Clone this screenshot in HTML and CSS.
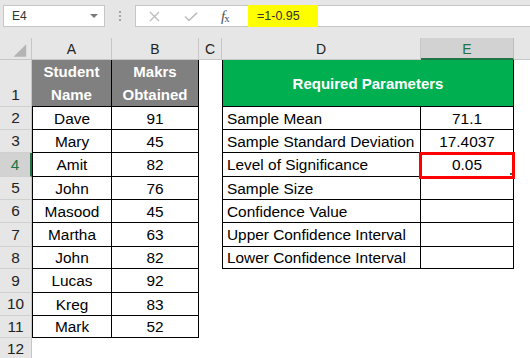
FILE: index.html
```html
<!DOCTYPE html>
<html>
<head>
<meta charset="utf-8">
<link rel="stylesheet" href="styles.css">
</head>
<body>
<div class="toolbar">
  <div class="namebox"><span>E4</span><span class="caret"></span></div>
  <div class="dots"><i></i><i></i><i></i></div>
  <div class="fbox">
    <svg class="ico-x" width="11" height="11" viewBox="0 0 11 11"><path d="M1 1L10 10M10 1L1 10" stroke="#bdbdbd" stroke-width="1.4" fill="none"/></svg>
    <svg class="ico-ok" width="14" height="10" viewBox="0 0 14 10"><path d="M1 4.5L5 8.5L13 0.8" stroke="#bdbdbd" stroke-width="1.6" fill="none"/></svg>
    <span class="fx"><i>f</i><sub>x</sub></span>
  </div>
  <div class="finput"><span class="hl">=1-0.95</span></div>
</div>
<div class="sheet">
  <div class="corner"><svg width="32" height="22" viewBox="0 0 32 22"><polygon points="27,6 27,19 14,19" fill="#b4b4b4"/></svg></div>
  <div class="ch">A</div><div class="ch">B</div><div class="ch">C</div><div class="ch">D</div><div class="ch sel">E</div><div class="ch last"></div>

  <div class="rh bottom">1</div>
  <div class="hd">Student<br>Name</div>
  <div class="hd">Makrs<br>Obtained</div>
  <div class="c"></div>
  <div class="grn">Required Parameters</div>
  <div class="c"></div>

  <div class="rh">2</div><div class="t tl">Dave</div><div class="t">91</div><div class="c"></div><div class="t tl lft">Sample Mean</div><div class="t">71.1</div><div class="c"></div>
  <div class="rh">3</div><div class="t tl">Mary</div><div class="t">45</div><div class="c"></div><div class="t tl lft">Sample Standard Deviation</div><div class="t">17.4037</div><div class="c"></div>
  <div class="rh sel">4</div><div class="t tl">Amit</div><div class="t">82</div><div class="c"></div><div class="t tl lft">Level of Significance</div><div class="t active">0.05</div><div class="c"></div>
  <div class="rh">5</div><div class="t tl">John</div><div class="t">76</div><div class="c"></div><div class="t tl lft">Sample Size</div><div class="t"></div><div class="c"></div>
  <div class="rh">6</div><div class="t tl">Masood</div><div class="t">45</div><div class="c"></div><div class="t tl lft">Confidence Value</div><div class="t"></div><div class="c"></div>
  <div class="rh">7</div><div class="t tl">Martha</div><div class="t">63</div><div class="c"></div><div class="t tl lft">Upper Confidence Interval</div><div class="t"></div><div class="c"></div>
  <div class="rh">8</div><div class="t tl">John</div><div class="t">82</div><div class="c"></div><div class="t tl lft">Lower Confidence Interval</div><div class="t"></div><div class="c"></div>
  <div class="rh">9</div><div class="t tl">Lucas</div><div class="t">92</div><div class="c"></div><div class="c"></div><div class="c"></div><div class="c"></div>
  <div class="rh">10</div><div class="t tl">Kreg</div><div class="t">83</div><div class="c"></div><div class="c"></div><div class="c"></div><div class="c"></div>
  <div class="rh">11</div><div class="t tl">Mark</div><div class="t">52</div><div class="c"></div><div class="c"></div><div class="c"></div><div class="c"></div>
  <div class="rh">12</div><div class="c"></div><div class="c"></div><div class="c"></div><div class="c"></div><div class="c"></div><div class="c"></div>
</div>
</body>
</html>
```

FILE: styles.css
```css
html, body {
  margin: 0;
  padding: 0;
  width: 530px;
  height: 358px;
  overflow: hidden;
  background: #e6e6e6;
  font-family: "Liberation Sans", Arial, sans-serif;
}

.toolbar {
  height: 38px;
  box-sizing: border-box;
  padding-top: 5px;
  display: flex;
  align-items: flex-start;
  background: #e6e6e6;
}

.namebox {
  margin-left: 3px;
  width: 102px;
  height: 22px;
  box-sizing: border-box;
  border: 1px solid #c6c6c6;
  background: #fff;
  display: flex;
  align-items: center;
  justify-content: space-between;
  padding: 0 6px 0 8px;
  font-size: 12px;
  color: #333;
}

.caret {
  width: 0;
  height: 0;
  border-left: 4px solid transparent;
  border-right: 4px solid transparent;
  border-top: 4px solid #7a7a7a;
}

.dots {
  width: 30px;
  height: 22px;
  display: flex;
  flex-direction: column;
  align-items: center;
  justify-content: center;
  gap: 2px;
}

.dots i {
  display: block;
  width: 2px;
  height: 2px;
  background: #a6a6a6;
}

.fbox {
  width: 113px;
  height: 22px;
  box-sizing: border-box;
  border: 1px solid #c6c6c6;
  border-right: none;
  background: #fff;
  display: flex;
  align-items: center;
  padding-left: 13px;
}

.ico-x { margin-top: 1px; }
.ico-ok { margin-left: 24px; margin-top: 2px; }

.fx {
  margin-left: 23px;
  font-family: "Liberation Serif", serif;
  font-size: 15px;
  color: #555;
  line-height: 1;
}
.fx sub {
  font-size: 11px;
  vertical-align: -1px;
  margin-left: -1px;
}

.finput {
  flex: 1;
  height: 22px;
  box-sizing: border-box;
  border-top: 1px solid #c6c6c6;
  border-bottom: 1px solid #c6c6c6;
  background: #fff;
  display: flex;
}

.hl {
  width: 70px;
  height: 22px;
  margin-top: -1px;
  box-sizing: border-box;
  background: #ffff00;
  padding-left: 9px;
  font-size: 12.5px;
  line-height: 22px;
  color: #333;
}

.sheet {
  display: grid;
  grid-template-columns: 32px 80px 87px 23px 199px 93px 1fr;
  grid-template-rows: 22px 47px 23px 23px 24px 23px 23px 24px 22px 24px 23px 22px 22px;
  background: #fff;
  font-size: 15.4px;
  color: #000;
}

.sheet > div {
  box-sizing: border-box;
  display: flex;
  align-items: center;
  justify-content: center;
  text-align: center;
  white-space: nowrap;
}

.corner {
  background: #e6e6e6;
  border-right: 1px solid #c6c6c6;
  border-bottom: 1px solid #c6c6c6;
}
.corner svg { display: block; }

.ch {
  background: #e6e6e6;
  border-right: 1px solid #c6c6c6;
  border-bottom: 1px solid #c6c6c6;
  font-size: 14px;
  color: #222;
  padding-top: 1px;
}
.ch.last { border-right: none; }
.ch.sel {
  background: #d2d2d2;
  color: #217346;
  border-bottom: 2px solid #217346;
  border-right: 1px solid #bdbdbd;
}

.rh {
  background: #e6e6e6;
  border-right: 1px solid #c6c6c6;
  border-bottom: 1px solid #d0d0d0;
  color: #222;
}
.rh.bottom {
  align-items: flex-end;
  line-height: 23px;
}
.rh.sel {
  background: #d2d2d2;
  color: #217346;
  border-right: 2px solid #217346;
}

.hd {
  background: #808080;
  color: #fff;
  font-weight: bold;
  font-size: 15px;
  line-height: 23px;
  border-right: 1px solid #000;
  border-bottom: 1px solid #000;
  white-space: normal !important;
}

.grn {
  grid-column: span 2;
  background: #00b050;
  color: #fff;
  font-weight: bold;
  font-size: 15px;
  border-left: 1px solid #000;
  border-right: 1px solid #000;
  border-bottom: 1px solid #000;
  padding-top: 1px;
}

.c { background: #fff; }

.t {
  background: #fff;
  border-right: 1px solid #000;
  border-bottom: 1px solid #000;
  padding-top: 1px;
}
.t.tl { border-left: 1px solid #000; }
.t.lft {
  justify-content: flex-start !important;
  padding-left: 4px;
}

.t.active { position: relative; }
.t.active::after {
  content: "";
  position: absolute;
  left: -2px;
  top: -1px;
  right: -2px;
  bottom: -3px;
  border: 3px solid #ff0000;
}
.t.active::before {
  content: "";
  position: absolute;
  right: 1px;
  bottom: 1px;
  width: 2px;
  height: 2px;
  background: #217346;
  z-index: 2;
}
```
